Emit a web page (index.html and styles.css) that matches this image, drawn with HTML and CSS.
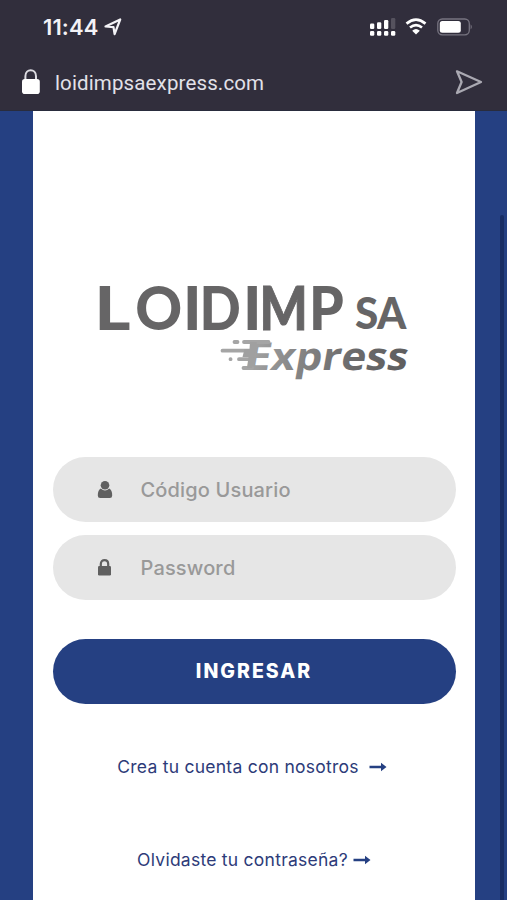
FILE: index.html
```html
<!DOCTYPE html>
<html lang="es">
<head>
<meta charset="utf-8">
<meta name="viewport" content="width=device-width">
<title>LOIDIMP SA Express</title>
<link rel="stylesheet" href="styles.css">
</head>
<body>
<header class="browser">
  <div class="status">
    <span class="time">11:44</span>
    <svg class="location" width="18" height="18" viewBox="0 0 18 18"><path d="M1.5 8.5 16.2 1.5 10.6 16.2 9.5 9.2Z"/></svg>
    <div class="indicators">
      <svg width="26" height="19" viewBox="0 0 26 19" fill="#fff"><g><rect x="0" y="5.5" width="4.3" height="5.5" rx="1.2"/><rect x="7" y="4.2" width="4.3" height="6.8" rx="1.2"/><rect x="14" y="2" width="4.3" height="9" rx="1.2"/><rect x="21" y="0" width="4.3" height="11" rx="1.2" fill="#55525e"/></g><g><rect y="13" width="4.3" height="4.7" rx="1.3"/><rect x="7" y="13" width="4.3" height="4.7" rx="1.3"/><rect x="14" y="13" width="4.3" height="4.7" rx="1.3"/><rect x="21" y="13" width="4.3" height="4.7" rx="1.3"/></g></svg>
      <svg class="wifi" width="22" height="18" viewBox="0 0 22 18"><path d="M1.5 5.6Q11-2.2 20.5 5.6M5 9.5Q11 4.8 17 9.5"/><path d="M7.2 12.8Q11 9.3 14.8 12.8L11 16.6Z"/></svg>
      <svg class="battery" width="36" height="18" viewBox="0 0 36 18"><rect x=".8" y="1" width="31.5" height="15.8" rx="4.5" fill="none" stroke="#777480" stroke-width="1.3"/><rect x="2.8" y="3.1" width="21" height="11.7" rx="2.5" fill="#fff"/><path d="M33.6 6.3Q36 9 33.6 11.6Z" fill="#777480"/></svg>
    </div>
  </div>
  <div class="address">
    <svg class="secure" width="20" height="26" viewBox="0 0 20 26"><path d="M4.4 12V7.2C4.4-.6 15 -.6 15 7.2V12" fill="none" stroke="#dddce2" stroke-width="2"/><rect x="1" y="10" width="17.8" height="15" rx="2.8" fill="#fff"/></svg>
    <span class="url">loidimpsaexpress.com</span>
    <svg class="send" width="28" height="26" viewBox="0 0 28 26"><path d="M2 2.3 26 13 2 24 6.6 13Z"/></svg>
  </div>
</header>
<main class="page">
  <form class="card">
    <svg class="logo" width="330" height="110" viewBox="90 280 330 110" role="img">
      <defs><linearGradient id="metal" gradientUnits="userSpaceOnUse" x1="240" x2="407" y1="0" y2="0"><stop stop-color="#a8a8a8"/><stop offset=".3" stop-color="#888"/><stop offset=".65" stop-color="#6c6b6c"/><stop offset="1" stop-color="#5e5d5e"/></linearGradient></defs>
      <g class="brand">
        <text transform="translate(92.5 330) scale(1.13 1)">L</text>
        <text transform="translate(133.3 330) scale(.95 1)">O</text>
        <text transform="translate(181 330)">I</text>
        <text transform="translate(197.5 330) scale(.89 1)">D</text>
        <text transform="translate(241 330)">I</text>
        <text class="wide" transform="translate(257.5 330) scale(.83 1)">M</text>
        <text transform="translate(307 330) scale(.91 1)">P</text>
      </g>
      <g class="suffix"><text transform="translate(353 329) scale(.96 1)">S</text><text transform="translate(375 329) scale(.95 1)">A</text></g>
      <g class="express" fill="url(#metal)" transform="translate(64 0) skewX(-10)"><text x="242" y="370" textLength="27" lengthAdjust="spacingAndGlyphs">E</text><text x="268.5" y="370" textLength="137" lengthAdjust="spacingAndGlyphs">xpress</text></g>
      <path d="M232.5 342H235.5M242 342H266.5M220.5 350.7H248M228.5 359.2H228.6M237 359.2H248M241.5 368H250" fill="none" stroke="#a5a5a5" stroke-width="3.8" stroke-linecap="round"/>
      <path d="M248 342H255L250 368H245L246.5 357H240.5L242.5 349H247.5Z" fill="#a0a0a0"/>
    </svg>
    <div class="field user">
      <svg width="16" height="20" viewBox="0 0 16 20"><circle cx="8" cy="5.2" r="4.3"/><path d="M3.8 8.5Q8 12.3 12.2 8.5Q15.2 9.8 15.2 15.5Q15.2 18 12.8 18H3.2Q.8 18 .8 15.5Q.8 9.8 3.8 8.5Z"/></svg>
      <span class="label">Código Usuario</span>
    </div>
    <div class="field password">
      <svg width="16" height="20" viewBox="0 0 16 20"><path d="M3.8 9V6C3.8.7 11.2.7 11.2 6V9" fill="none" stroke="#606060" stroke-width="2.2"/><rect x="1" y="8" width="13" height="9.4" rx="1.2"/></svg>
      <span class="label">Password</span>
    </div>
    <button class="submit" type="button">INGRESAR</button>
    <a class="link create"><span>Crea tu cuenta con nosotros</span><svg width="18" height="10" viewBox="0 0 18 10"><path d="M.5 3.8H12V.8L17.5 5 12 9.2V6.2H.5Z"/></svg></a>
    <a class="link forgot"><span>Olvidaste tu contraseña?</span><svg width="18" height="10" viewBox="0 0 18 10"><path d="M.5 3.8H12V.8L17.5 5 12 9.2V6.2H.5Z"/></svg></a>
  </form>
  <div class="scrollbar"></div>
</main>
</body>
</html>
```
FILE: styles.css
```css
* { box-sizing: border-box; }
body { margin: 0; height: 900px; overflow: hidden; background: #254082; font-family: Inter, sans-serif; }
svg { display: block; flex: none; }
.browser { height: 111px; background: #312e3c; color: #f3f2f6; border-bottom: 1px solid #292c3d; }
.status { height: 54px; display: flex; align-items: center; padding: 0 34px 0 43px; }
.time { width: 56px; font-size: 22px; font-weight: 600; letter-spacing: .1px; white-space: nowrap; }
.location { margin-left: 5px; fill: none; stroke: #f3f2f6; stroke-width: 2.2; stroke-linejoin: round; }
.indicators { display: flex; align-items: center; margin-left: auto; }
.wifi { margin-left: 9px; fill: none; stroke: #fff; stroke-width: 2.7; }
.wifi path:last-child { fill: #fff; stroke: none; }
.battery { margin-left: 10px; }
.address { height: 56px; display: flex; align-items: center; padding: 0 24px 0 21px; }
.url { margin: 2px 0 0 14px; font: 20.5px Roboto, sans-serif; color: #e2e1e9; letter-spacing: .13px; }
.send { margin-left: auto; fill: none; stroke: #aaa9b2; stroke-width: 2.3; stroke-linejoin: round; }
.page { height: 789px; display: flex; justify-content: space-between; padding-left: 33px; }
.card { width: 442px; height: 789px; background: #fff; display: flex; flex-direction: column; align-items: center; padding-top: 169px; }
.logo { margin-left: 5px; overflow: visible; }
.brand { font: 900 61px Lato, sans-serif; fill: #666566; }
.wide { stroke: #666566; stroke-width: .9px; }
.suffix { font: 900 44px Lato, sans-serif; fill: #666566; }
.express { font: 700 38.6px "Open Sans", sans-serif; }
.field { width: 403px; height: 65px; flex: none; display: flex; align-items: center; padding-left: 44px; border-radius: 33px; background: #e6e6e6; fill: #606060; }
.user { margin-top: 67px; }
.password { margin-top: 13px; }
.label { margin-left: 28px; font: 500 20px Inter, sans-serif; letter-spacing: .15px; color: #999; white-space: nowrap; }
.submit { width: 403px; height: 65px; flex: none; margin-top: 39px; padding: 0 0 1px; border: 0; border-radius: 33px; background: #254082; color: #fff; font: 800 19.5px Inter, sans-serif; letter-spacing: 2px; }
.link { height: 28px; display: flex; align-items: center; flex: none; color: #2d3b79; fill: #254082; font: 17.5px Inter, sans-serif; letter-spacing: .25px; white-space: nowrap; }
.link span { margin-top: -2px; }
.create { margin: 49px 4px 0 0; gap: 10px; }
.forgot { margin-top: 65px; gap: 5px; }
.scrollbar { width: 4px; margin: 104px 3px 0 0; background: #192e64; border-radius: 2px 2px 0 0; }
```
